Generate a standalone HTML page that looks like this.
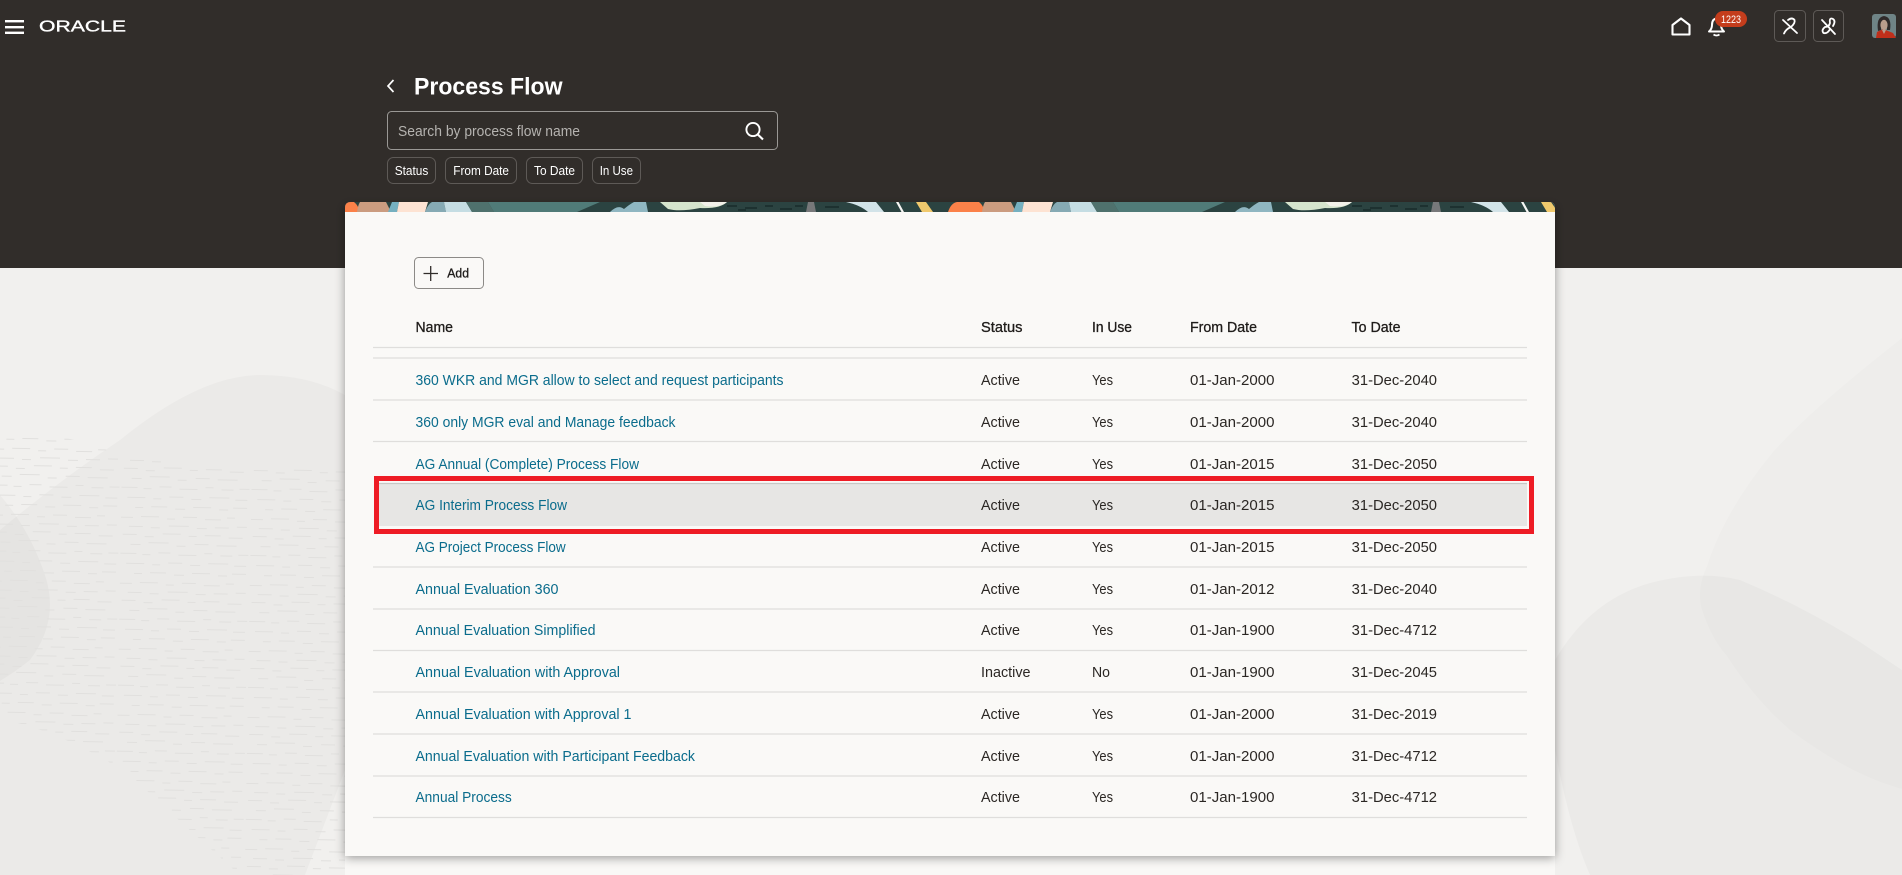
<!DOCTYPE html>
<html lang="en"><head><meta charset="utf-8"><title>Process Flow</title>
<style>
html,body{margin:0;padding:0;width:1902px;height:875px;overflow:hidden;background:#f1f0ee}
svg{display:block;position:absolute;left:0;top:0}
text{font-family:"Liberation Sans",Arial,sans-serif;white-space:pre}
.l{fill:#0a6c8c;font-size:14.5px}
.t{fill:#2b2724;font-size:14.5px}
.h{fill:#1f1c1a;font-size:14.5px;stroke:#1f1c1a;stroke-width:.3px}
.c{fill:#fff;font-size:12.5px}
.g{stroke:#dfdedc;stroke-width:1.2}
</style></head><body>
<svg width="1902" height="875" viewBox="0 0 1902 875" xmlns="http://www.w3.org/2000/svg">
<defs>
<filter id="sh" x="-5%" y="-5%" width="110%" height="110%"><feGaussianBlur stdDeviation="5"/></filter>
<pattern id="dash" width="130" height="66" patternUnits="userSpaceOnUse" patternTransform="rotate(1)">
<g stroke="#e1e0de" stroke-width="1" fill="none">
<path d="M2 4h14M24 6h9M42 3h18M68 5h8M84 4h16M108 6h14"/>
<path d="M10 14h10M28 12h20M56 15h9M74 13h14M96 14h20"/>
<path d="M0 23h16M22 24h8M38 22h12M58 24h18M84 22h8M100 24h12M118 23h10"/>
<path d="M6 33h18M32 34h8M48 32h14M70 34h10M88 32h20M114 34h12"/>
<path d="M14 43h8M30 42h16M54 44h10M72 42h18M98 44h9M112 42h14"/>
<path d="M0 53h12M20 52h18M46 54h8M62 52h14M84 54h16M106 52h8"/>
<path d="M8 62h14M30 63h9M48 61h20M76 63h10M94 62h14M116 61h10"/>
</g></pattern>
<clipPath id="bannerClip"><path d="M345 212V208Q345 202 351 202H1549Q1555 202 1555 208V212Z"/></clipPath>
<g id="tile">
<rect x="323" y="202" width="625" height="10" fill="#2b4341"/>
<path d="M323 212Q326 203 332 202H354Q358 205 360 212Z" fill="#fb8149"/>
<path d="M357 212Q358 205 360 202H386L391 212Z" fill="#cb9c80"/>
<path d="M388 212L392 202H399L397 212Z" fill="#75b0c0"/>
<path d="M397 212L399 202H428L425 212Z" fill="#fde3d3"/>
<path d="M425 212Q428 204 432 202H444L446 212Z" fill="#86aab4"/>
<path d="M444 202H466L472 212H446Z" fill="#c5dde3"/>
<path d="M466 202H488L494 212H472Z" fill="#4f716d"/>
<path d="M488 202H600L577 212H494Z" fill="#507b78"/>
<path d="M610 212Q618 204 624 209Q630 204 634 202H646L648 212Z" fill="#8fb6c1"/>
<path d="M660 202H727Q720 209 700 208Q680 212 668 209Z" fill="#d5e4cd"/>
<path d="M700 202H727Q720 208 705 206Z" fill="#f2f1ea"/>
<path d="M727 206h10M745 208h12M765 206h8M780 209h12M795 206h8M738 210h8M825 207h14" stroke="#0f1f1e" stroke-width="1" fill="none"/>
<path d="M808 202H814L816 212H806Z" fill="#77787a"/>
<path d="M846 202H876L884 212H868Q860 205 846 202Z" fill="#d2e3e8"/>
<path d="M896 202H898.5L904 212H901.5Z" fill="#f5f5f3"/>
<path d="M916 202H926L933 212H922Z" fill="#f0c96d"/>
</g>
</defs>

<!-- page background -->
<rect width="1902" height="875" fill="#f1f0ee"/>
<path d="M0 530Q60 480 120 440Q200 375 260 375Q310 375 345 395V770L305 875H0Z" fill="#000" fill-opacity=".025"/>
<path d="M0 495Q30 530 45 575Q60 620 30 660Q15 672 0 681Z" fill="#000" fill-opacity=".025"/>
<path d="M0 432Q60 430 120 455Q200 470 345 468V875H240Q200 840 130 775Q60 730 0 719Z" fill="url(#dash)"/>
<path d="M1902 338Q1810 410 1773 452Q1725 510 1707 566Q1696 590 1702 610Q1712 640 1727 656Q1755 700 1790 730Q1850 775 1902 789Z" fill="#000" fill-opacity=".013"/>
<path d="M1555 660Q1590 600 1650 583Q1700 570 1740 580Q1800 605 1860 642L1902 670V875H1590Q1570 830 1555 750Z" fill="#000" fill-opacity=".024"/>

<!-- top dark band -->
<rect width="1902" height="268" fill="#312d2a"/>

<!-- lower panel + card -->
<rect x="345" y="856" width="1210" height="30" fill="#f9f8f6"/>
<rect x="345" y="206" width="1210" height="652" fill="#000" fill-opacity=".38" filter="url(#sh)"/>
<path d="M345 856V208Q345 202 351 202H1549Q1555 202 1555 208V856Z" fill="#faf9f7"/>
<g clip-path="url(#bannerClip)"><use href="#tile"/><use href="#tile" x="625"/></g>

<!-- header -->
<g fill="#fff"><rect x="5" y="20" width="19" height="2.4"/><rect x="5" y="26" width="19" height="2.4"/><rect x="5" y="31.6" width="19" height="2.4"/></g>
<text x="39" y="31.7" font-size="16" fill="#fff" stroke="#fff" stroke-width=".35" textLength="87" lengthAdjust="spacingAndGlyphs">ORACLE</text>
<path d="M1672.5 34.5V25L1681 18.5L1689.5 25V34.5Z" fill="none" stroke="#fff" stroke-width="2.1" stroke-linejoin="round"/>
<path d="M1709 31.5Q1712 29 1712 25Q1712 19 1716.5 18.5Q1721 19 1721 25Q1721 29 1724 31.5Z" fill="none" stroke="#fff" stroke-width="2" stroke-linejoin="round"/>
<path d="M1713.5 34.5Q1716.5 36.5 1719.5 34.5" fill="none" stroke="#fff" stroke-width="1.8"/>
<rect x="1715" y="11" width="32" height="16" rx="8" fill="#c43d1c"/>
<text x="1721" y="23" font-size="11" fill="#fff" textLength="20" lengthAdjust="spacingAndGlyphs">1223</text>
<rect x="1774.5" y="10.5" width="31" height="31" rx="4" fill="none" stroke="#5e5a57" stroke-width="1"/>
<rect x="1813.5" y="10.5" width="30" height="31" rx="4" fill="none" stroke="#5e5a57" stroke-width="1"/>
<g fill="none" stroke="#fff" stroke-width="1.8" stroke-linecap="round">
<path d="M1783 20L1797 33"/>
<path d="M1788 20Q1792 17 1794.5 20Q1795.5 23 1791 27Q1786 29 1784 33.5"/>
<path d="M1822 20L1835 34"/>
<path d="M1833 19Q1829 17 1830 23Q1829 27 1825 27Q1821 30 1823.5 33Q1827 34 1829.5 30M1833 19Q1836 21 1833 26"/>
</g>
<!-- avatar -->
<rect x="1872" y="14" width="24" height="24" rx="3" fill="#6f8486"/>
<path d="M1876 38L1877 32L1883 29L1888 31L1893 33L1896 38Z" fill="#bf2f1a"/>
<path d="M1878 31Q1876 17 1884 16Q1892 17 1890 30L1887 30V23L1881 22V30Z" fill="#2f2a2a"/>
<ellipse cx="1884" cy="25" rx="3.6" ry="5.2" fill="#b99d8c"/>
<path d="M1882 30L1884 34L1886 30Z" fill="#b99d8c"/>

<!-- title area -->
<path d="M393.5 80L388 86L393.5 92" fill="none" stroke="#fff" stroke-width="1.7"/>
<text x="414" y="94.5" font-size="24" font-weight="700" fill="#fff" textLength="148.5" lengthAdjust="spacingAndGlyphs">Process Flow</text>
<rect x="387.5" y="111.5" width="390" height="38" rx="4" fill="none" stroke="#9a9895" stroke-width="1"/>
<text x="398" y="136" font-size="14.5" fill="#b5b3b0" textLength="182" lengthAdjust="spacingAndGlyphs">Search by process flow name</text>
<circle cx="753" cy="129.5" r="6.6" fill="none" stroke="#fff" stroke-width="1.9"/>
<path d="M757.8 134.5L763 139.5" stroke="#fff" stroke-width="2.1"/>
<g fill="none" stroke="#5e5a57" stroke-width="1">
<rect x="387.5" y="157.5" width="48" height="26" rx="6"/>
<rect x="445.5" y="157.5" width="71" height="26" rx="6"/>
<rect x="526.5" y="157.5" width="56" height="26" rx="6"/>
<rect x="592.5" y="157.5" width="48" height="26" rx="6"/>
</g>
<text class="c" x="394.7" y="175" textLength="33.6" lengthAdjust="spacingAndGlyphs">Status</text>
<text class="c" x="453.3" y="175" textLength="55.7" lengthAdjust="spacingAndGlyphs">From Date</text>
<text class="c" x="534" y="175" textLength="41" lengthAdjust="spacingAndGlyphs">To Date</text>
<text class="c" x="599.7" y="175" textLength="33.3" lengthAdjust="spacingAndGlyphs">In Use</text>

<!-- add -->
<rect x="414.5" y="257.5" width="69" height="31" rx="4" fill="none" stroke="#8c8a87" stroke-width="1"/>
<path d="M423.5 273.5H438M430.7 266V281" stroke="#312d2a" stroke-width="1.3"/>
<text x="447.3" y="277.7" font-size="12.5" fill="#1f1c1a" stroke="#1f1c1a" stroke-width=".3" textLength="21.7" lengthAdjust="spacingAndGlyphs">Add</text>

<!-- table head -->
<text class="h" x="415.5" y="331.8" textLength="37.5" lengthAdjust="spacingAndGlyphs">Name</text>
<text class="h" x="981" y="331.8" textLength="41.5" lengthAdjust="spacingAndGlyphs">Status</text>
<text class="h" x="1092" y="331.8" textLength="40" lengthAdjust="spacingAndGlyphs">In Use</text>
<text class="h" x="1190" y="331.8" textLength="67" lengthAdjust="spacingAndGlyphs">From Date</text>
<text class="h" x="1351.5" y="331.8" textLength="49" lengthAdjust="spacingAndGlyphs">To Date</text>

<!-- selected row -->
<rect x="374" y="476" width="1160" height="58" fill="#faf9f7"/>
<rect x="379" y="483" width="1148" height="43" fill="#e7e6e4"/>
<path d="M379 483.5H1527" stroke="#c8c7c5" stroke-width="1.2"/>

<!-- row lines -->
<g class="g">
<path d="M373 347.5H1527"/><path d="M373 358H1527"/><path d="M373 400H1527"/><path d="M373 441.5H1527"/>
<path d="M373 567H1527"/><path d="M373 609H1527"/><path d="M373 650.5H1527"/><path d="M373 692H1527"/><path d="M373 734H1527"/><path d="M373 776H1527"/><path d="M373 817.5H1527"/>
</g>
<rect x="376.5" y="478.5" width="1155" height="53" fill="none" stroke="#ee1c25" stroke-width="5"/>

<!-- rows -->
<g>
<text class="l" x="415.5" y="385" textLength="368" lengthAdjust="spacingAndGlyphs">360 WKR and MGR allow to select and request participants</text>
<text class="t" x="981" y="385" textLength="39" lengthAdjust="spacingAndGlyphs">Active</text><text class="t" x="1092" y="385" textLength="21" lengthAdjust="spacingAndGlyphs">Yes</text><text class="t" x="1190" y="385" textLength="84.5" lengthAdjust="spacingAndGlyphs">01-Jan-2000</text><text class="t" x="1351.7" y="385" textLength="85.3" lengthAdjust="spacingAndGlyphs">31-Dec-2040</text>

<text class="l" x="415.5" y="427" textLength="260" lengthAdjust="spacingAndGlyphs">360 only MGR eval and Manage feedback</text>
<text class="t" x="981" y="427" textLength="39" lengthAdjust="spacingAndGlyphs">Active</text><text class="t" x="1092" y="427" textLength="21" lengthAdjust="spacingAndGlyphs">Yes</text><text class="t" x="1190" y="427" textLength="84.5" lengthAdjust="spacingAndGlyphs">01-Jan-2000</text><text class="t" x="1351.7" y="427" textLength="85.3" lengthAdjust="spacingAndGlyphs">31-Dec-2040</text>

<text class="l" x="415.5" y="469" textLength="223.5" lengthAdjust="spacingAndGlyphs">AG Annual (Complete) Process Flow</text>
<text class="t" x="981" y="469" textLength="39" lengthAdjust="spacingAndGlyphs">Active</text><text class="t" x="1092" y="469" textLength="21" lengthAdjust="spacingAndGlyphs">Yes</text><text class="t" x="1190" y="469" textLength="84.5" lengthAdjust="spacingAndGlyphs">01-Jan-2015</text><text class="t" x="1351.7" y="469" textLength="85.3" lengthAdjust="spacingAndGlyphs">31-Dec-2050</text>

<text class="l" x="415.5" y="510" textLength="151.5" lengthAdjust="spacingAndGlyphs">AG Interim Process Flow</text>
<text class="t" x="981" y="510" textLength="39" lengthAdjust="spacingAndGlyphs">Active</text><text class="t" x="1092" y="510" textLength="21" lengthAdjust="spacingAndGlyphs">Yes</text><text class="t" x="1190" y="510" textLength="84.5" lengthAdjust="spacingAndGlyphs">01-Jan-2015</text><text class="t" x="1351.7" y="510" textLength="85.3" lengthAdjust="spacingAndGlyphs">31-Dec-2050</text>

<text class="l" x="415.5" y="552" textLength="150.2" lengthAdjust="spacingAndGlyphs">AG Project Process Flow</text>
<text class="t" x="981" y="552" textLength="39" lengthAdjust="spacingAndGlyphs">Active</text><text class="t" x="1092" y="552" textLength="21" lengthAdjust="spacingAndGlyphs">Yes</text><text class="t" x="1190" y="552" textLength="84.5" lengthAdjust="spacingAndGlyphs">01-Jan-2015</text><text class="t" x="1351.7" y="552" textLength="85.3" lengthAdjust="spacingAndGlyphs">31-Dec-2050</text>

<text class="l" x="415.5" y="594" textLength="143" lengthAdjust="spacingAndGlyphs">Annual Evaluation 360</text>
<text class="t" x="981" y="594" textLength="39" lengthAdjust="spacingAndGlyphs">Active</text><text class="t" x="1092" y="594" textLength="21" lengthAdjust="spacingAndGlyphs">Yes</text><text class="t" x="1190" y="594" textLength="84.5" lengthAdjust="spacingAndGlyphs">01-Jan-2012</text><text class="t" x="1351.7" y="594" textLength="85.3" lengthAdjust="spacingAndGlyphs">31-Dec-2040</text>

<text class="l" x="415.5" y="635" textLength="180" lengthAdjust="spacingAndGlyphs">Annual Evaluation Simplified</text>
<text class="t" x="981" y="635" textLength="39" lengthAdjust="spacingAndGlyphs">Active</text><text class="t" x="1092" y="635" textLength="21" lengthAdjust="spacingAndGlyphs">Yes</text><text class="t" x="1190" y="635" textLength="84.5" lengthAdjust="spacingAndGlyphs">01-Jan-1900</text><text class="t" x="1351.7" y="635" textLength="85.3" lengthAdjust="spacingAndGlyphs">31-Dec-4712</text>

<text class="l" x="415.5" y="677" textLength="204.5" lengthAdjust="spacingAndGlyphs">Annual Evaluation with Approval</text>
<text class="t" x="981" y="677" textLength="49.5" lengthAdjust="spacingAndGlyphs">Inactive</text><text class="t" x="1092" y="677" textLength="18" lengthAdjust="spacingAndGlyphs">No</text><text class="t" x="1190" y="677" textLength="84.5" lengthAdjust="spacingAndGlyphs">01-Jan-1900</text><text class="t" x="1351.7" y="677" textLength="85.3" lengthAdjust="spacingAndGlyphs">31-Dec-2045</text>

<text class="l" x="415.5" y="719" textLength="216" lengthAdjust="spacingAndGlyphs">Annual Evaluation with Approval 1</text>
<text class="t" x="981" y="719" textLength="39" lengthAdjust="spacingAndGlyphs">Active</text><text class="t" x="1092" y="719" textLength="21" lengthAdjust="spacingAndGlyphs">Yes</text><text class="t" x="1190" y="719" textLength="84.5" lengthAdjust="spacingAndGlyphs">01-Jan-2000</text><text class="t" x="1351.7" y="719" textLength="85.3" lengthAdjust="spacingAndGlyphs">31-Dec-2019</text>

<text class="l" x="415.5" y="761" textLength="279.5" lengthAdjust="spacingAndGlyphs">Annual Evaluation with Participant Feedback</text>
<text class="t" x="981" y="761" textLength="39" lengthAdjust="spacingAndGlyphs">Active</text><text class="t" x="1092" y="761" textLength="21" lengthAdjust="spacingAndGlyphs">Yes</text><text class="t" x="1190" y="761" textLength="84.5" lengthAdjust="spacingAndGlyphs">01-Jan-2000</text><text class="t" x="1351.7" y="761" textLength="85.3" lengthAdjust="spacingAndGlyphs">31-Dec-4712</text>

<text class="l" x="415.5" y="802" textLength="96.2" lengthAdjust="spacingAndGlyphs">Annual Process</text>
<text class="t" x="981" y="802" textLength="39" lengthAdjust="spacingAndGlyphs">Active</text><text class="t" x="1092" y="802" textLength="21" lengthAdjust="spacingAndGlyphs">Yes</text><text class="t" x="1190" y="802" textLength="84.5" lengthAdjust="spacingAndGlyphs">01-Jan-1900</text><text class="t" x="1351.7" y="802" textLength="85.3" lengthAdjust="spacingAndGlyphs">31-Dec-4712</text>
</g>
</svg>
</body></html>
